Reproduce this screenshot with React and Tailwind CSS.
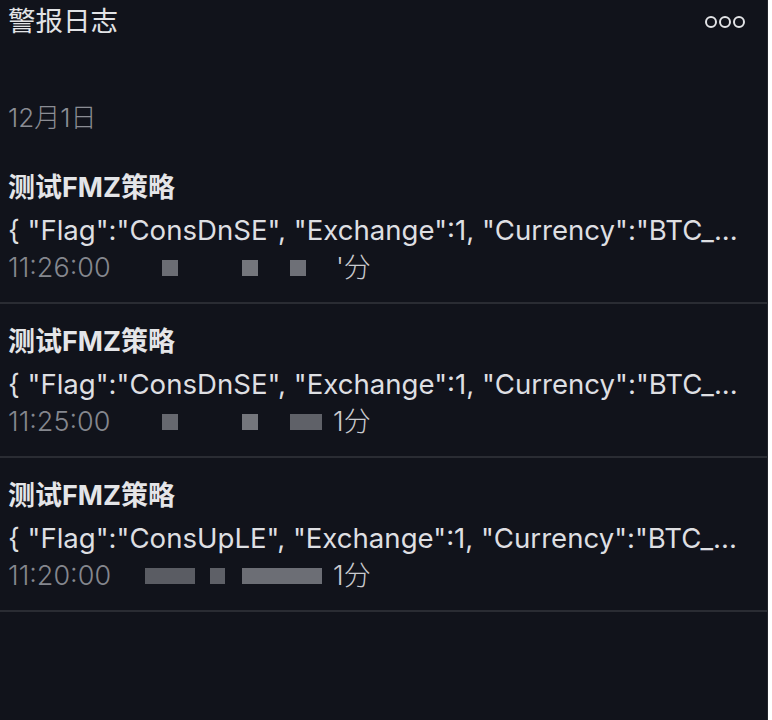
const items = [
  {
    flag: "ConsDnSE",
    time: "11:26:00",
    tail: "'分",
    tailGap: 30,
    blocks: [
      { w: 16, gap: 54, shade: "bg-[#6b6d74]" },
      { w: 16, gap: 64, shade: "bg-[#74767c]" },
      { w: 16, gap: 32, shade: "bg-[#6e7077]" },
    ],
  },
  {
    flag: "ConsDnSE",
    time: "11:25:00",
    tail: "1分",
    tailGap: 11,
    blocks: [
      { w: 16, gap: 54, shade: "bg-[#66686f]" },
      { w: 16, gap: 64, shade: "bg-[#74767c]" },
      { w: 32, gap: 32, shade: "bg-[#5f6168]" },
    ],
  },
  {
    flag: "ConsUpLE",
    time: "11:20:00",
    tail: "1分",
    tailGap: 11,
    blocks: [
      { w: 50, gap: 37, shade: "bg-[#5a5c63]" },
      { w: 15, gap: 15, shade: "bg-[#5e6067]" },
      { w: 80, gap: 17, shade: "bg-[#6c6e75]" },
    ],
  },
];

function AlertItem({ flag, time, tail, tailGap, blocks }) {
  return (
    <div className="border-b-2 border-[#2a2c33] pl-2 pt-[20px] pb-[16px]">
      <div className="h-[36px] flex items-center text-[27px] font-bold text-[#e4e5e8]">测试FMZ策略</div>
      <div className="mt-[3px] h-[44px] flex items-center text-[27.6px] text-[#dedfe2] whitespace-nowrap">
        {'{ "Flag":"' + flag + '", "Exchange":1, "Currency":"BTC_...'}
      </div>
      <div className="-mt-[3px] h-[36px] flex items-center text-[27px] text-[#85878e] font-light">
        <span className="w-[108px] shrink-0">{time}</span>
        {blocks.map((b, i) => (
          <span
            key={i}
            className={`h-[16px] shrink-0 ${b.shade}`}
            style={{ width: b.w, marginLeft: b.gap - (i === 0 ? 8 : 0) }}
          />
        ))}
        <span className="text-[#c9cace]" style={{ marginLeft: tailGap }}>{tail}</span>
      </div>
    </div>
  );
}

export default function App() {
  return (
    <div
      className="flex h-[720px] w-[772px] bg-white"
      style={{ fontFamily: '"Inter", "Noto Sans CJK SC", sans-serif' }}
    >
      <div className="flex-1 h-full bg-[#11131b] border-r border-[#22242b]">
        <div className="flex items-center justify-between pl-2 pr-[22px] h-[44px]">
          <span className="text-[27.5px] text-[#e2e3e6]">警报日志</span>
          <span className="flex gap-[2px]">
            <span className="h-[12px] w-[12px] rounded-full border-[2.5px] border-[#e2e3e6]" />
            <span className="h-[12px] w-[12px] rounded-full border-[2.5px] border-[#e2e3e6]" />
            <span className="h-[12px] w-[12px] rounded-full border-[2.5px] border-[#e2e3e6]" />
          </span>
        </div>
        <div className="pl-2 pt-[55px] h-[36px] box-content flex items-center text-[26px] text-[#8b8d94] font-light">12月1日</div>
        <div className="mt-[15px]">
          {items.map((it, i) => (
            <AlertItem key={i} {...it} />
          ))}
        </div>
      </div>
      <div className="w-[4px]" />
    </div>
  );
}
